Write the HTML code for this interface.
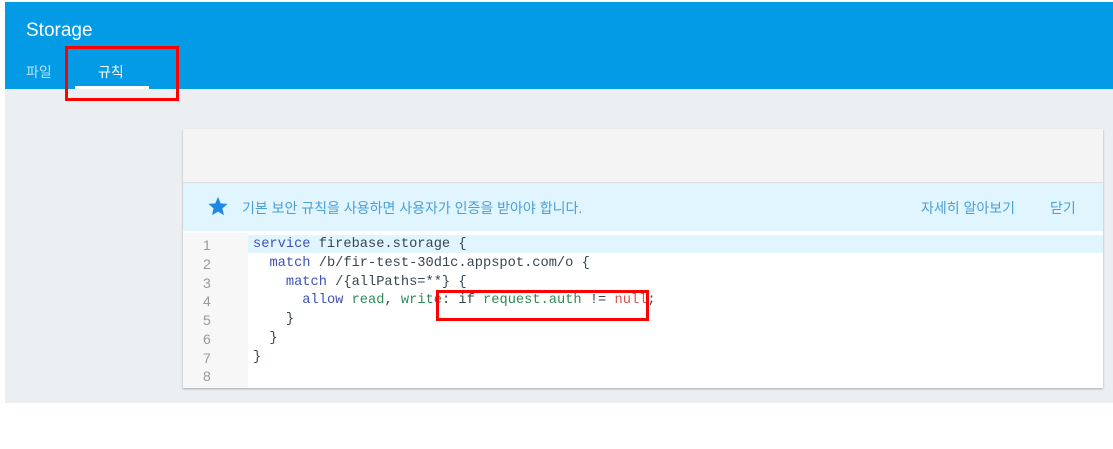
<!DOCTYPE html>
<html><head><meta charset="utf-8"><style>
*{margin:0;padding:0;box-sizing:border-box}
body{width:1113px;height:449px;background:#fff;position:relative;overflow:hidden;font-family:"Liberation Sans","Noto Sans CJK KR",sans-serif}
.hdr{position:absolute;left:5px;top:2px;width:1108px;height:87px;background:#039be5}
.title{position:absolute;left:26px;top:20px;color:#fff;font-size:19px}
.tab{position:absolute;top:62px;font-size:14px;color:#fff}
.bg{position:absolute;left:5px;top:89px;width:1108px;height:314px;background:#eceff1}
.card{position:absolute;left:183px;top:129px;width:920px;height:259px;background:#fff;box-shadow:0 1px 2px rgba(0,0,0,.3);overflow:hidden}
.top{height:54px;background:#f4f4f4;border-bottom:1px solid #ddd}
.ban{height:48px;background:#e1f5fe;position:relative;font-size:14px;color:#4a9fd8}
.gut{position:absolute;left:0;top:104px;width:65px;height:160px;background:#f7f7f7}
.code{position:absolute;left:0;top:107px;width:920px;font-family:"Liberation Mono",monospace;font-size:13.7px;color:#37474f}
.ln{height:18.75px;line-height:18.75px;position:relative;white-space:pre}
.n{position:absolute;left:20px;color:#999;font-family:"Liberation Sans",sans-serif;font-size:14px}
.t{position:absolute;left:70px}
.k{color:#3f51b5}.g{color:#2e8b57}.r{color:#d9534f}
.red{position:absolute;border:3px solid #f00}
</style></head><body>
<div class="hdr"></div>
<div class="title">Storage</div>
<div class="tab" style="left:26px;color:#b3e0f7">파일</div>
<div class="tab" style="left:98px">규칙</div>
<div style="position:absolute;left:75px;top:86px;width:74px;height:3px;background:#fff"></div>
<div class="bg"></div>
<div class="card">
<div class="top"></div>
<div class="ban">
<svg style="position:absolute;left:23px;top:12px" width="24" height="23" viewBox="0 0 24 24"><path fill="#1e88e5" d="M12 17.3l6.2 3.7-1.6-7 5.4-4.7-7.2-.6L12 2 9.2 8.7 2 9.3l5.4 4.7-1.6 7z"/></svg>
<span style="position:absolute;left:59px;top:15px">기본 보안 규칙을 사용하면 사용자가 인증을 받아야 합니다.</span>
<span style="position:absolute;left:738px;top:15px">자세히 알아보기</span>
<span style="position:absolute;left:867px;top:15px">닫기</span>
</div>
<div class="gut"></div>
<div style="position:absolute;left:65px;top:106px;width:855px;height:18px;background:#e1f5fe"></div>
<div class="code">
<div class="ln"><span class="n">1</span><span class="t"><span class="k">service</span> firebase.storage {</span></div>
<div class="ln"><span class="n">2</span><span class="t">  <span class="k">match</span> /b/fir-test-30d1c.appspot.com/o {</span></div>
<div class="ln"><span class="n">3</span><span class="t">    <span class="k">match</span> /{allPaths=**} {</span></div>
<div class="ln"><span class="n">4</span><span class="t">      <span class="k">allow</span> <span class="g">read</span>, <span class="g">write</span>: if <span class="g">request.auth</span> != <span class="r">null</span>;</span></div>
<div class="ln"><span class="n">5</span><span class="t">    }</span></div>
<div class="ln"><span class="n">6</span><span class="t">  }</span></div>
<div class="ln"><span class="n">7</span><span class="t">}</span></div>
<div class="ln"><span class="n">8</span><span class="t"></span></div>
</div>
</div>
<div class="red" style="left:65px;top:46px;width:114px;height:55px"></div>
<div class="red" style="left:436px;top:290px;width:213px;height:31px"></div>
</body></html>
